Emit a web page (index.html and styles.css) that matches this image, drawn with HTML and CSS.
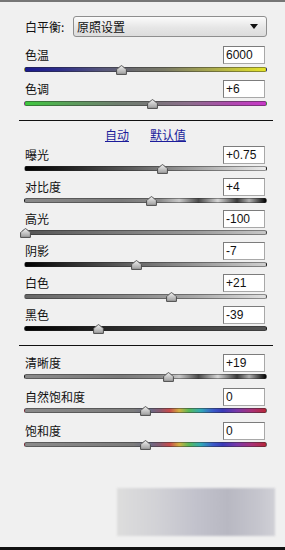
FILE: index.html
```html
<!DOCTYPE html>
<html lang="zh">
<head>
<meta charset="utf-8">
<link rel="stylesheet" href="styles.css">
</head>
<body>
<div class="panel">
  <div class="wb">
    <span class="wb-label">白平衡:</span>
    <div class="select"><span>原照设置</span><svg class="caret" width="8" height="5" viewBox="0 0 8 5"><path d="M0 0H8L4 5Z" fill="#111"/></svg></div>
  </div>

  <div class="section s1">
    <div class="group">
      <div class="row"><span class="label">色温</span><div class="num">6000</div></div>
      <div class="slider"><div class="track t-temp"></div><svg class="thumb" style="left:40.3%" width="11" height="10" viewBox="0 0 11 10"><use href="#th"/></svg></div>
    </div>
    <div class="group">
      <div class="row"><span class="label">色调</span><div class="num">+6</div></div>
      <div class="slider"><div class="track t-tint"></div><svg class="thumb" style="left:53%" width="11" height="10" viewBox="0 0 11 10"><use href="#th"/></svg></div>
    </div>
  </div>

  <div class="sep"></div>

  <div class="links"><a>自动</a><a>默认值</a></div>

  <div class="section s2">
    <div class="group">
      <div class="row"><span class="label">曝光</span><div class="num">+0.75</div></div>
      <div class="slider"><div class="track t-exp"></div><svg class="thumb" style="left:57.2%" width="11" height="10" viewBox="0 0 11 10"><use href="#th"/></svg></div>
    </div>
    <div class="group">
      <div class="row"><span class="label">对比度</span><div class="num">+4</div></div>
      <div class="slider"><div class="track t-con"></div><svg class="thumb" style="left:52.3%" width="11" height="10" viewBox="0 0 11 10"><use href="#th"/></svg></div>
    </div>
    <div class="group">
      <div class="row"><span class="label">高光</span><div class="num">-100</div></div>
      <div class="slider"><div class="track t-hi"></div><svg class="thumb" style="left:0.6%" width="11" height="10" viewBox="0 0 11 10"><use href="#th"/></svg></div>
    </div>
    <div class="group">
      <div class="row"><span class="label">阴影</span><div class="num">-7</div></div>
      <div class="slider"><div class="track t-sh"></div><svg class="thumb" style="left:46.5%" width="11" height="10" viewBox="0 0 11 10"><use href="#th"/></svg></div>
    </div>
    <div class="group">
      <div class="row"><span class="label">白色</span><div class="num">+21</div></div>
      <div class="slider"><div class="track t-wh"></div><svg class="thumb" style="left:60.5%" width="11" height="10" viewBox="0 0 11 10"><use href="#th"/></svg></div>
    </div>
    <div class="group">
      <div class="row"><span class="label">黑色</span><div class="num">-39</div></div>
      <div class="slider"><div class="track t-bl"></div><svg class="thumb" style="left:30.5%" width="11" height="10" viewBox="0 0 11 10"><use href="#th"/></svg></div>
    </div>
  </div>

  <div class="sep"></div>

  <div class="section s3">
    <div class="group">
      <div class="row"><span class="label">清晰度</span><div class="num">+19</div></div>
      <div class="slider"><div class="track t-con"></div><svg class="thumb" style="left:59.3%" width="11" height="10" viewBox="0 0 11 10"><use href="#th"/></svg></div>
    </div>
    <div class="group">
      <div class="row"><span class="label">自然饱和度</span><div class="num">0</div></div>
      <div class="slider"><div class="track t-sat"></div><svg class="thumb" style="left:49.8%" width="11" height="10" viewBox="0 0 11 10"><use href="#th"/></svg></div>
    </div>
    <div class="group">
      <div class="row"><span class="label">饱和度</span><div class="num">0</div></div>
      <div class="slider"><div class="track t-sat"></div><svg class="thumb" style="left:49.8%" width="11" height="10" viewBox="0 0 11 10"><use href="#th"/></svg></div>
    </div>
  </div>

  <div class="blur"></div>
</div>

<svg width="0" height="0" class="defs">
  <defs>
    <linearGradient id="tg" x1="0" y1="0" x2="0" y2="1">
      <stop offset="0" stop-color="#f0f0f0"/>
      <stop offset="1" stop-color="#9c9c9c"/>
    </linearGradient>
    <path id="th" d="M5.5 0.6 C6.5 1.2 9.6 3.6 10.4 4.6 L10.4 9.4 L0.6 9.4 L0.6 4.6 C1.4 3.6 4.5 1.2 5.5 0.6 Z" fill="url(#tg)" stroke="#4c4c4c" stroke-width="1"/>
  </defs>
</svg>
</body>
</html>
```

FILE: styles.css
```css
html, body {
  margin: 0;
  padding: 0;
}
body {
  background: #f0f0f0;
  font-family: "Noto Sans CJK SC", "Liberation Sans", sans-serif;
  font-size: 12px;
  color: #111;
}
.panel {
  box-sizing: border-box;
  height: 550px;
  border-top: 2px solid #767676;
  border-bottom: 3px solid #111;
  display: flex;
  flex-direction: column;
  overflow: hidden;
}
.defs {
  position: absolute;
}
.wb {
  display: flex;
  align-items: center;
  margin: 14px 18px 0 25px;
  height: 21px;
}
.wb-label {
  width: 48px;
  line-height: 16px;
}
.select {
  flex: 1;
  box-sizing: border-box;
  height: 21px;
  border: 1px solid #8e8e8e;
  border-radius: 3px;
  background: linear-gradient(#fbfbfb, #e6e6e6 55%, #dcdcdc);
  display: flex;
  align-items: center;
  justify-content: space-between;
  padding: 0 8px 0 3px;
  line-height: 16px;
}
.caret {
  display: block;
}
.section {
  display: flex;
  flex-direction: column;
  margin: 0 18px 0 24px;
}
.s1 {
  margin-top: 9px;
  gap: 7px;
}
.s2 {
  gap: 6px;
}
.s3 {
  margin-top: 8px;
  gap: 8px;
}
.row {
  display: flex;
  align-items: center;
  justify-content: space-between;
  height: 18px;
}
.label {
  padding-left: 1px;
  line-height: 16px;
}
.num {
  box-sizing: border-box;
  width: 42px;
  height: 18px;
  margin-right: 2px;
  border: 1px solid #7c7c7c;
  border-right-color: #a8a8a8;
  border-bottom-color: #a8a8a8;
  background: #fff;
  font-family: "Liberation Sans", Arial, sans-serif;
  font-size: 12px;
  line-height: 16px;
  padding-left: 2px;
  color: #111;
}
.s1 .slider {
  margin-top: 1px;
}
.slider {
  position: relative;
  height: 8px;
}
.track {
  position: absolute;
  left: 0;
  right: 0;
  top: 2px;
  height: 5px;
  box-sizing: border-box;
  border-radius: 3px;
  border: 1px solid rgba(40, 40, 40, 0.45);
}
.thumb {
  position: absolute;
  top: 0;
  margin-left: -5.5px;
  display: block;
}
.t-temp {
  background: linear-gradient(90deg, #1a1a8e 0%, #2e2e8a 14%, #56567c 32%, #6c6c6c 46%, #7a7a66 58%, #a6a650 76%, #e4e42a 100%);
}
.t-tint {
  background: linear-gradient(90deg, #3fc83f 0%, #5aa05a 18%, #6f7f6f 38%, #777 52%, #8c6e8c 68%, #b048b0 86%, #c838c8 100%);
}
.t-exp {
  background: linear-gradient(90deg, #000 0%, #2a2a2a 22%, #5e5e5e 45%, #8c8c8c 62%, #c0c0c0 82%, #ececec 100%);
}
.t-con {
  background: linear-gradient(90deg, #8a8a8a 0%, #7a7a7a 40%, #8a8a8a 56%, #c8c8c8 64%, #4a4a4a 72%, #d6d6d6 80%, #3a3a3a 88%, #b0b0b0 93%, #000 100%);
}
.t-hi {
  background: linear-gradient(90deg, #555 0%, #777 35%, #999 70%, #c8c8c8 100%);
}
.t-sh {
  background: linear-gradient(90deg, #000 0%, #2e2e2e 20%, #666 45%, #9a9a9a 72%, #d0d0d0 100%);
}
.t-wh {
  background: linear-gradient(90deg, #666 0%, #858585 40%, #a8a8a8 70%, #e0e0e0 100%);
}
.t-bl {
  background: linear-gradient(90deg, #000 0%, #1c1c1c 25%, #3a3a3a 55%, #555 100%);
}
.t-sat {
  background: linear-gradient(90deg, #8a8a8a 0%, #7c7c7c 45%, #6a6a86 52%, #8a5a70 56%, #c84a4a 60%, #d0b040 64%, #58b858 68%, #30a8b8 73%, #3a5ac8 78%, #3a3ab8 82%, #7a38a8 88%, #a83078 94%, #b8283a 100%);
}
.sep {
  height: 1px;
  background: #111;
  margin: 13px 12px 0 19px;
}
.links {
  display: flex;
  justify-content: center;
  gap: 21px;
  padding: 6px 18px 3px 24px;
  line-height: 16px;
}
.links a {
  color: #1c1c9a;
  text-decoration: underline;
}
.blur {
  margin: 40px 0 0 117px;
  width: 158px;
  height: 48px;
  background: linear-gradient(90deg, #dddddd 0%, #d2d2d6 25%, #c2c2cc 50%, #b8b8c2 70%, #c6c6ce 90%, #d0d0d6 100%);
  filter: blur(1px);
}
```
